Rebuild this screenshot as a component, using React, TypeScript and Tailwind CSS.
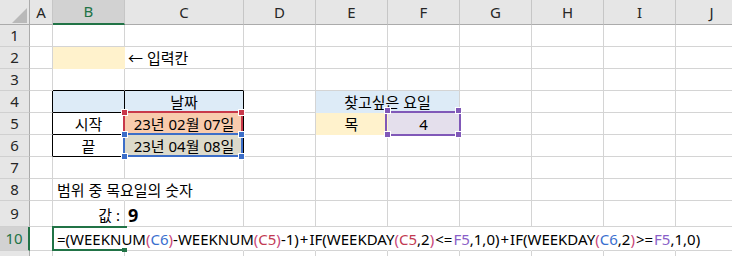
import React from "react";

const FONT = "font-['Noto_Sans','Noto_Sans_CJK_KR',sans-serif]";

type CellProps = {
  w: string;
  h: string;
  cls?: string;
  rb?: string;
  children?: React.ReactNode;
};

function Cell({ w, h, cls = "", rb = "border-r-[#d4d4d4] border-b-[#d4d4d4]", children }: CellProps) {
  return (
    <div className={`${w} ${h} shrink-0 box-border border-r border-b ${rb} flex items-center ${cls}`}>
      {children}
    </div>
  );
}

const WS = ["w-[23px]", "w-[72px]", "w-[119px]", "w-[72px]", "w-[72px]", "w-[72px]", "w-[72px]", "w-[72px]", "w-[72px]", "w-[72px]"];
const LETTERS = ["A", "B", "C", "D", "E", "F", "G", "H", "I", "J"];

function RowHead({ h, n, active = false }: { h: string; n: number; active?: boolean }) {
  return (
    <div
      className={`w-[30px] ${h} shrink-0 box-border border-b border-b-[#d0d0d0] flex items-center justify-center text-[15px] ${
        active
          ? "bg-[#d2d2d2] text-[#217346] border-r-2 border-r-[#217346]"
          : "bg-[#e6e6e6] text-[#262626] border-r border-r-[#ababab]"
      }`}
    >
      {n}
    </div>
  );
}

function PlainRow({ n, h }: { n: number; h: string }) {
  return (
    <div className="flex">
      <RowHead h={h} n={n} />
      {WS.map((w, i) => (
        <Cell key={i} w={w} h={h} />
      ))}
    </div>
  );
}

const K = "text-black";
const OP = "text-black px-[1px]";
const P = "text-[#c9487a]";
const BL = "text-[#3a6fcf]";
const RD = "text-[#c23a52]";
const PU = "text-[#8a5fc8]";

const TOKENS: [string, string][] = [
  ["=(WEEKNUM", K], ["(", P], ["C6", BL], [")", P], ["-WEEKNUM", K], ["(", P], ["C5", RD], [")", P],
  ["-1)", K], ["+", OP], ["IF(WEEKDAY", K], ["(", P], ["C5", RD], [",2", K], [")", P], ["<=", OP], ["F5", PU], [",1,0)", K],
  ["+", OP], ["IF(WEEKDAY", K],
  ["(", P], ["C6", BL], [",2", K], [")", P], [">=", OP], ["F5", PU], [",1,0)", K],
];

function Handle({ x, y, color }: { x: string; y: string; color: string }) {
  return <div className={`absolute ${x} ${y} w-[7px] h-[7px] border border-white ${color}`} />;
}

export default function App() {
  const h22 = "h-[22px]";
  return (
    <div className={`relative w-[732px] h-[256px] overflow-hidden bg-white ${FONT} text-[15px] leading-none text-black`}>
      {/* header */}
      <div className="flex">
        <div className="relative w-[30px] h-[25px] shrink-0 box-border border-r border-b border-r-[#ababab] border-b-[#ababab] bg-[#e6e6e6]">
          <svg className="absolute left-[12px] top-[8px]" width="15" height="15" viewBox="0 0 15 15">
            <polygon points="15,0 15,15 0,15" fill="#b9b9b9" />
          </svg>
        </div>
        {LETTERS.map((l, i) =>
          l === "B" ? (
            <div
              key={l}
              className={`${WS[i]} h-[25px] shrink-0 box-border border-r border-r-[#c6c6c6] border-b-2 border-b-[#217346] bg-[#d2d2d2] text-[#217346] flex items-center justify-center text-[15px]`}
            >
              {l}
            </div>
          ) : (
            <div
              key={l}
              className={`${WS[i]} h-[25px] shrink-0 box-border border-r border-r-[#c6c6c6] border-b border-b-[#ababab] bg-[#e6e6e6] text-[#262626] flex items-center justify-center text-[15px]`}
            >
              {l}
            </div>
          )
        )}
      </div>

      <PlainRow n={1} h={h22} />

      {/* row 2 */}
      <div className="flex">
        <RowHead h={h22} n={2} />
        <Cell w={WS[0]} h={h22} />
        <Cell w={WS[1]} h={h22} cls="bg-[#fff2cc]" rb="border-r-transparent border-b-transparent" />
        <Cell w={WS[2]} h={h22} cls="pl-[3px] pt-[1px]">
          <span className="whitespace-nowrap">← 입력칸</span>
        </Cell>
        {WS.slice(3).map((w, i) => (
          <Cell key={i} w={w} h={h22} />
        ))}
      </div>

      {/* row 3 */}
      <div className="flex">
        <RowHead h={h22} n={3} />
        <Cell w={WS[0]} h={h22} />
        <Cell w={WS[1]} h={h22} rb="border-r-[#d4d4d4] border-b-black" />
        <Cell w={WS[2]} h={h22} rb="border-r-[#d4d4d4] border-b-black" />
        {WS.slice(3).map((w, i) => (
          <Cell key={i} w={w} h={h22} />
        ))}
      </div>

      {/* row 4 */}
      <div className="flex">
        <RowHead h={h22} n={4} />
        <Cell w={WS[0]} h={h22} rb="border-r-black border-b-[#d4d4d4]" />
        <Cell w={WS[1]} h={h22} cls="bg-[#ddebf7]" rb="border-r-black border-b-black" />
        <Cell w={WS[2]} h={h22} cls="bg-[#ddebf7] justify-center pt-[1px]" rb="border-r-black border-b-black">
          날짜
        </Cell>
        <Cell w={WS[3]} h={h22} />
        <Cell w="w-[144px]" h={h22} cls="bg-[#ddebf7] justify-center pt-[1px]" rb="border-r-[#d4d4d4] border-b-transparent">
          찾고싶은 요일
        </Cell>
        {WS.slice(6).map((w, i) => (
          <Cell key={i} w={w} h={h22} />
        ))}
      </div>

      {/* row 5 */}
      <div className="flex">
        <RowHead h={h22} n={5} />
        <Cell w={WS[0]} h={h22} rb="border-r-black border-b-[#d4d4d4]" />
        <Cell w={WS[1]} h={h22} cls="justify-center pt-[1px]" rb="border-r-black border-b-black">
          시작
        </Cell>
        <Cell w={WS[2]} h={h22} cls="bg-[#f8cbad] justify-center pt-[1px]" rb="border-r-black border-b-black">
          23년 02월 07일
        </Cell>
        <Cell w={WS[3]} h={h22} />
        <Cell w={WS[4]} h={h22} cls="bg-[#fff2cc] justify-center pt-[1px]" rb="border-r-transparent border-b-transparent">
          목
        </Cell>
        <Cell w={WS[5]} h={h22} cls="bg-[#e4dfec] justify-center pt-[1px]">
          4
        </Cell>
        {WS.slice(6).map((w, i) => (
          <Cell key={i} w={w} h={h22} />
        ))}
      </div>

      {/* row 6 */}
      <div className="flex">
        <RowHead h={h22} n={6} />
        <Cell w={WS[0]} h={h22} rb="border-r-black border-b-[#d4d4d4]" />
        <Cell w={WS[1]} h={h22} cls="justify-center pt-[1px]" rb="border-r-black border-b-black">
          끝
        </Cell>
        <Cell w={WS[2]} h={h22} cls="bg-[#dcdacb] justify-center pt-[1px]" rb="border-r-black border-b-black">
          23년 04월 08일
        </Cell>
        {WS.slice(3).map((w, i) => (
          <Cell key={i} w={w} h={h22} />
        ))}
      </div>

      <PlainRow n={7} h={h22} />

      {/* row 8 */}
      <div className="flex">
        <RowHead h={h22} n={8} />
        <Cell w={WS[0]} h={h22} />
        <Cell w={WS[1]} h={h22} cls="pl-[4px] pt-[1px]" rb="border-r-transparent border-b-[#d4d4d4]">
          <span className="relative z-10 whitespace-nowrap">범위 중 목요일의 숫자</span>
        </Cell>
        {WS.slice(2).map((w, i) => (
          <Cell key={i} w={w} h={h22} />
        ))}
      </div>

      {/* row 9 */}
      <div className="flex">
        <RowHead h="h-[26px]" n={9} />
        <Cell w={WS[0]} h="h-[26px]" />
        <Cell w={WS[1]} h="h-[26px]" cls="justify-end pr-[4px] pt-[3px]">
          값 :
        </Cell>
        <Cell w={WS[2]} h="h-[26px]" cls="pl-[3px] pt-[2px] font-bold text-[18px]">
          9
        </Cell>
        {WS.slice(3).map((w, i) => (
          <Cell key={i} w={w} h="h-[26px]" />
        ))}
      </div>

      {/* row 10 */}
      <div className="flex">
        <RowHead h="h-[24px]" n={10} active />
        <Cell w={WS[0]} h="h-[24px]" />
        <Cell w={WS[1]} h="h-[24px]" cls="pl-[4px] pt-[1px]" rb="border-r-transparent border-b-[#d4d4d4]">
          <span className="relative z-10 whitespace-nowrap">
            {TOKENS.map(([t, c], i) => (
              <span key={i} className={c}>
                {t}
              </span>
            ))}
          </span>
        </Cell>
        {WS.slice(2).map((w, i) => (
          <Cell key={i} w={w} h="h-[24px]" rb={i < 7 ? "border-r-transparent border-b-[#d4d4d4]" : undefined} />
        ))}
      </div>

      <PlainRow n={11} h={h22} />

      {/* range overlays */}
      <div className="absolute left-[123px] top-[111px] w-[120px] h-[24px] border-2 border-[#c8384a] pointer-events-none" />
      <Handle x="left-[121px]" y="top-[109px]" color="bg-[#c8384a]" />
      <Handle x="left-[238px]" y="top-[109px]" color="bg-[#c8384a]" />
      <div className="absolute left-[123px] top-[133px] w-[120px] h-[24px] border-2 border-[#3c6ec8] pointer-events-none" />
      <Handle x="left-[121px]" y="top-[131px]" color="bg-[#3c6ec8]" />
      <Handle x="left-[238px]" y="top-[131px]" color="bg-[#3c6ec8]" />
      <Handle x="left-[121px]" y="top-[153px]" color="bg-[#3c6ec8]" />
      <Handle x="left-[238px]" y="top-[153px]" color="bg-[#3c6ec8]" />
      <div className="absolute left-[385px] top-[111px] w-[76px] h-[25px] border-2 border-[#8058b8] pointer-events-none" />
      <Handle x="left-[384px]" y="top-[107px]" color="bg-[#8058b8]" />
      <Handle x="left-[455px]" y="top-[107px]" color="bg-[#8058b8]" />
      <Handle x="left-[384px]" y="top-[131px]" color="bg-[#8058b8]" />
      <Handle x="left-[455px]" y="top-[131px]" color="bg-[#8058b8]" />

      {/* active cell B10 border (editing) */}
      <div className="absolute left-[52px] top-[226px] w-[75px] h-[25px] border-l-2 border-t-2 border-b-2 border-[#217346] pointer-events-none" />
      <div className="absolute left-[122px] top-[248px] w-[5px] h-[4px] bg-[#217346]" />
    </div>
  );
}
